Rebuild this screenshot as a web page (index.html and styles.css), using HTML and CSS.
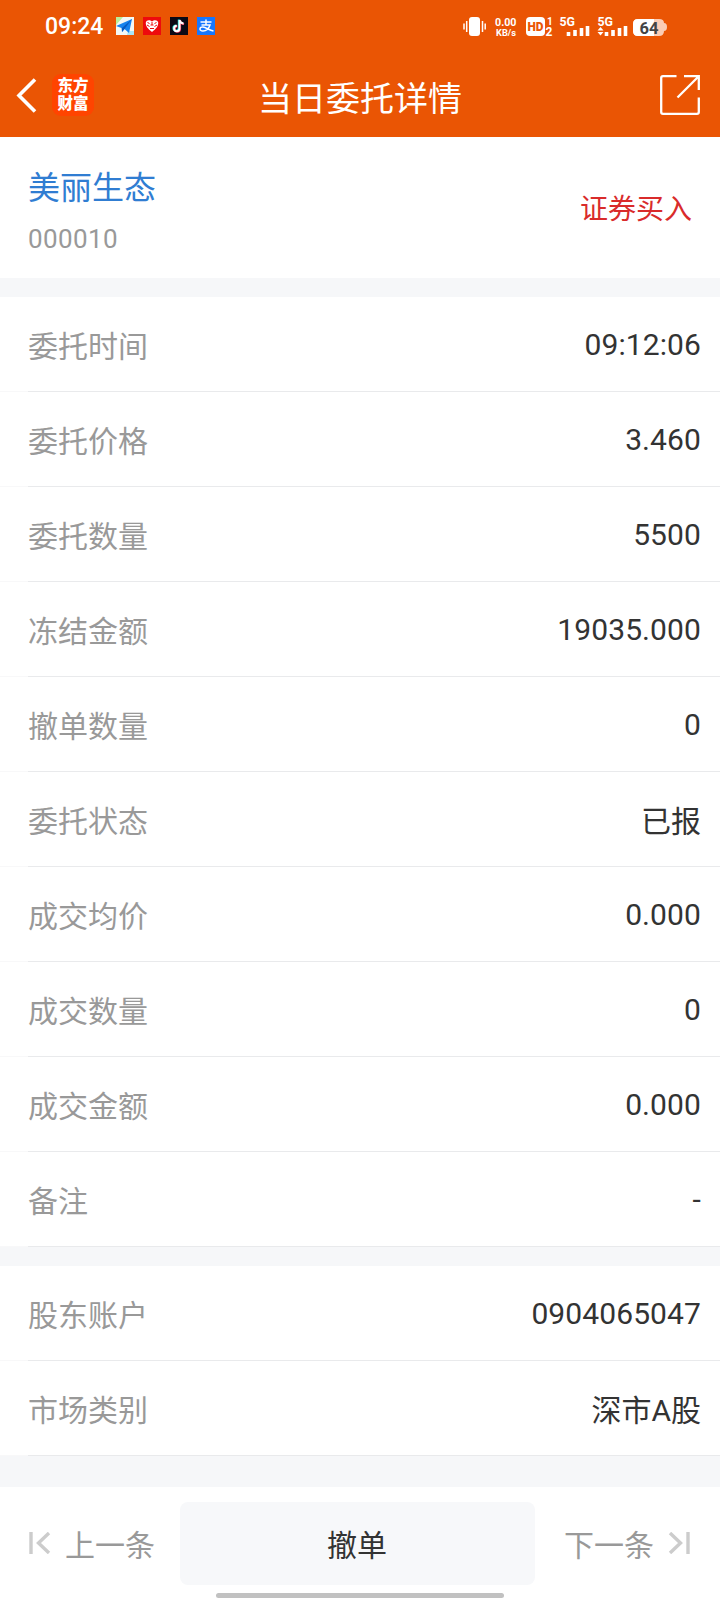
FILE: index.html
```html
<!DOCTYPE html>
<html lang="zh-CN">
<head>
    <meta charset="UTF-8">
    <meta name="viewport" content="width=device-width, initial-scale=1.0">
    <title>当日委托详情</title>
    <link rel="stylesheet" href="styles.css">
</head>
<body>
    <header class="header">
        <div class="status-bar">
            <span class="clock">09:24</span>
            <div class="app-icons">
                <svg width="18" height="18" viewBox="0 0 18 18">
                    <rect width="18" height="18" fill="#f3f8f5"/>
                    <path d="M0 0h7L0 8z" fill="#b9ee9a"/>
                    <path d="M12 14h6v4h-7z" fill="#a8e6f8"/>
                    <path d="M0 9L16 2L13 16L8.500 12L6 15L5.500 11z" fill="#1683ee"/>
                    <path d="M16 2L6 11L6 15L8.500 12z" fill="#075bc1"/>
                </svg>
                <svg width="18" height="18" viewBox="0 0 18 18">
                    <rect width="18" height="18" fill="#ee0a0d"/>
                    <path d="M9 15C5 12 2.500 9 2.800 5.500C3.500 2.600 7 2.500 9 4.500C11 2.500 14.500 2.600 15.200 5.500C15.500 9 13 12 9 15z" fill="#fff"/>
                    <path d="M4.500 5.500l2 1M13.500 5.500l-2 1M4 8l2.500 1.500M14 8l-2.500 1.500M7 11.500h4M9 5v3M7.500 8h3" stroke="#ee0a0d" stroke-width="1" fill="none"/>
                </svg>
                <svg width="18" height="18" viewBox="0 0 18 18">
                    <rect width="18" height="18" fill="#0b0915"/>
                    <path d="M9.500 3v8.500a2.700 2.700 0 1 1-2.700-2.700M9.500 3c.4 2 1.800 3.300 4 3.500" stroke="#27e3df" stroke-width="2" fill="none" transform="translate(-.7 -.4)"/>
                    <path d="M9.500 3v8.500a2.700 2.700 0 1 1-2.700-2.700M9.500 3c.4 2 1.800 3.300 4 3.500" stroke="#f33b5e" stroke-width="2" fill="none" transform="translate(.6 .5)"/>
                    <path d="M9.500 3v8.500a2.700 2.700 0 1 1-2.700-2.700M9.500 3c.4 2 1.800 3.300 4 3.500" stroke="#fff" stroke-width="1.900" fill="none"/>
                </svg>
                <svg width="18" height="18" viewBox="0 0 18 18">
                    <rect width="18" height="18" fill="#1677ff"/>
                    <path d="M3.500 5h11M9 2.500v5.500M4.500 8h8.500c-1 3-3.500 6-7 6c-4.500 0-3.500-4.500 0-4c3 .4 6 3 10.500 4" stroke="#fff" stroke-width="1.500" fill="none"/>
                </svg>
            </div>
            <div class="status-right">
                <svg class="status-svg" width="206" height="24" viewBox="0 0 206 24">
                    <!-- vibrate -->
                    <rect x="6" y="3" width="11" height="19" rx="3" fill="#fff"/>
                    <path d="M1 9.500v6M3.700 7v11M19.500 7v11M22.200 9.500v6" stroke="#fff" stroke-width="1.500"/>
                    <!-- network speed -->
                    <text x="32" y="12" class="tiny" font-size="11" textLength="21.500" lengthAdjust="spacingAndGlyphs">0.00</text>
                    <text x="33" y="21.500" class="tiny" font-size="9.500" textLength="20" lengthAdjust="spacingAndGlyphs">KB/s</text>
                    <!-- HD -->
                    <rect x="63" y="3" width="19" height="19" rx="4" fill="#fff"/>
                    <text x="64.500" y="17.200" class="tiny hd" font-size="13" textLength="16" lengthAdjust="spacingAndGlyphs">HD</text>
                    <text x="84" y="10.500" class="tiny" font-size="10">1</text>
                    <text x="82.500" y="22" class="tiny" font-size="12">2</text>
                    <!-- sim 1 -->
                    <text x="96.500" y="12" class="tiny" font-size="12" textLength="15.500" lengthAdjust="spacingAndGlyphs">5G</text>
                    <path d="M105.500 22v-4M112 22v-6M118.500 22v-8M124.500 22v-10" stroke="#fff" stroke-width="3.600"/>
                    <!-- sim 2 -->
                    <text x="134.500" y="12" class="tiny" font-size="12" textLength="15.500" lengthAdjust="spacingAndGlyphs">5G</text>
                    <path d="M134.500 16.500l3-3.500 3 3.500zM134.500 18l3 3.500 3-3.500z" fill="#fff"/>
                    <path d="M143.500 22v-4M150 22v-6M156.500 22v-8M162.500 22v-10" stroke="#fff" stroke-width="3.600"/>
                    <!-- battery -->
                    <path d="M175 5h21q5 0 5 4q3 0 3 4t-3 4q0 5-5 5h-21q-5 0-5-5v-7q0-5 5-5z" fill="#fbcdb5"/>
                    <path d="M175 5h16v17h-16q-5 0-5-5v-7q0-5 5-5z" fill="#fff"/>
                    <text x="176.500" y="19.500" class="battery-text" font-size="16.500" textLength="19" lengthAdjust="spacingAndGlyphs">64</text>
                </svg>
            </div>
        </div>
        <div class="nav-bar">
            <div class="nav-left">
                <svg width="22" height="36" viewBox="0 0 22 36">
                    <path d="M19 2.500L3 18.500L19 34.500" fill="none" stroke="#fff" stroke-width="3.600"/>
                </svg>
                <div class="logo">东方<br>财富</div>
            </div>
            <h1 class="title">当日委托详情</h1>
            <svg class="share" width="40" height="40" viewBox="0 0 40 40">
                <path d="M16.500 1.200H3q-1.800 0-1.800 1.800v34q0 1.800 1.800 1.800h34q1.800 0 1.800-1.800V22.500M24 1.200h14.800V15M38.500 1.500L17.500 22.500" fill="none" stroke="#fff" stroke-width="2.300"/>
            </svg>
        </div>
    </header>

    <section class="stock">
        <div class="stock-info">
            <div class="stock-name">美丽生态</div>
            <div class="stock-code">000010</div>
        </div>
        <div class="direction">证券买入</div>
    </section>

    <section class="list">
        <div class="row"><span class="label">委托时间</span><span class="value">09:12:06</span></div>
        <div class="row"><span class="label">委托价格</span><span class="value">3.460</span></div>
        <div class="row"><span class="label">委托数量</span><span class="value">5500</span></div>
        <div class="row"><span class="label">冻结金额</span><span class="value">19035.000</span></div>
        <div class="row"><span class="label">撤单数量</span><span class="value">0</span></div>
        <div class="row"><span class="label">委托状态</span><span class="value text">已报</span></div>
        <div class="row"><span class="label">成交均价</span><span class="value">0.000</span></div>
        <div class="row"><span class="label">成交数量</span><span class="value">0</span></div>
        <div class="row"><span class="label">成交金额</span><span class="value">0.000</span></div>
        <div class="row"><span class="label">备注</span><span class="value">-</span></div>
    </section>

    <section class="list">
        <div class="row"><span class="label">股东账户</span><span class="value">0904065047</span></div>
        <div class="row"><span class="label">市场类别</span><span class="value text">深市A股</span></div>
    </section>

    <footer class="footer">
        <div class="actions">
            <div class="pager prev">
                <svg width="22" height="22" viewBox="0 0 22 22">
                    <path d="M2 0v22M20 1L9.500 11L20 21" fill="none" stroke="#ccc" stroke-width="3.400"/>
                </svg>
                <span>上一条</span>
            </div>
            <button class="cancel">撤单</button>
            <div class="pager next">
                <span>下一条</span>
                <svg width="22" height="22" viewBox="0 0 22 22">
                    <path d="M20 0v22M2 1L12.500 11L2 21" fill="none" stroke="#ccc" stroke-width="3.400"/>
                </svg>
            </div>
        </div>
        <div class="home-bar"></div>
    </footer>
</body>
</html>
```
FILE: styles.css
```css
* {
    box-sizing: border-box;
}

body {
    margin: 0;
    height: 1600px;
    display: flex;
    flex-direction: column;
    background-color: #f6f7f9;
    font-family: Roboto, "Noto Sans CJK SC", sans-serif;
    color: #333;
}

.header {
    height: 137px;
    background-color: #ea5504;
    color: #fff;
}

/* Status bar */
.status-bar {
    display: flex;
    align-items: center;
    height: 54px;
    padding-left: 45px;
}

.clock {
    width: 71px;
    font-size: 23px;
    font-weight: 500;
    line-height: 54px;
}

.app-icons {
    display: flex;
    gap: 9px;
    margin-top: -2px;
}

.status-right {
    margin-left: auto;
    padding-right: 51px;
}

.status-svg {
    display: block;
    margin-top: -2px;
}

.tiny {
    fill: #fff;
    font-weight: bold;
}

.hd {
    fill: #ea5504;
    font-weight: 900;
}

.battery-text {
    fill: #444;
    font-weight: bold;
}

/* Title bar */
.nav-bar {
    display: grid;
    grid-template-columns: 1fr auto 1fr;
    align-items: center;
    height: 81px;
    padding: 0 20px 0 16px;
}

.nav-left {
    display: flex;
    align-items: center;
    gap: 14px;
}

.logo {
    width: 42px;
    height: 42px;
    padding-top: 3px;
    border-radius: 9px;
    background-color: #ff4400;
    font-size: 15.500px;
    font-weight: 900;
    line-height: 18px;
    text-align: center;
}

.title {
    margin: 3px 0 0 4px;
    font-size: 34px;
    font-weight: normal;
}

.share {
    justify-self: end;
}

/* Stock */
.stock {
    display: flex;
    justify-content: space-between;
    align-items: center;
    height: 141px;
    padding: 0 28px;
    background-color: #fff;
}

.stock-name {
    color: #307dd2;
    font-size: 32px;
}

.stock-code {
    margin-top: 16px;
    color: #999;
    font-size: 26px;
    letter-spacing: 0.4px;
}

.direction {
    margin-top: -2px;
    color: #d92b2b;
    font-size: 28px;
}

/* Details */
.list {
    margin-top: 19px;
}

.row {
    display: flex;
    justify-content: space-between;
    align-items: center;
    height: 95px;
    padding: 0 19px 0 28px;
    background-color: #fff;
    background-image: linear-gradient(to right, #f8f8f9 28px, #e9eaec 28px);
    background-position: 0 100%;
    background-size: 100% 1px;
    background-repeat: no-repeat;
    font-size: 30px;
}

.label {
    margin-top: -2px;
    color: #999;
}

.value {
    letter-spacing: 0.1px;
}

.text {
    margin-top: -2px;
    letter-spacing: 0;
}

/* Bottom buttons */
.footer {
    height: 113px;
    margin-top: auto;
    padding-top: 15px;
    background-color: #fff;
}

.actions {
    display: grid;
    grid-template-columns: 180px 355px 1fr;
    height: 83px;
}

.pager {
    display: flex;
    align-items: center;
    padding-bottom: 2px;
    color: #999;
    font-size: 30px;
}

.prev {
    gap: 14px;
    padding-left: 29px;
}

.next {
    gap: 14px;
    padding-left: 29px;
}

.cancel {
    padding: 0 1px 2px 0;
    border: none;
    border-radius: 8px;
    background-color: #f7f8fa;
    color: #333;
    font-family: inherit;
    font-size: 30px;
}

.home-bar {
    width: 288px;
    height: 5px;
    margin: 8px auto 0;
    border-radius: 3px;
    background-color: #c1c1c1;
}
```
